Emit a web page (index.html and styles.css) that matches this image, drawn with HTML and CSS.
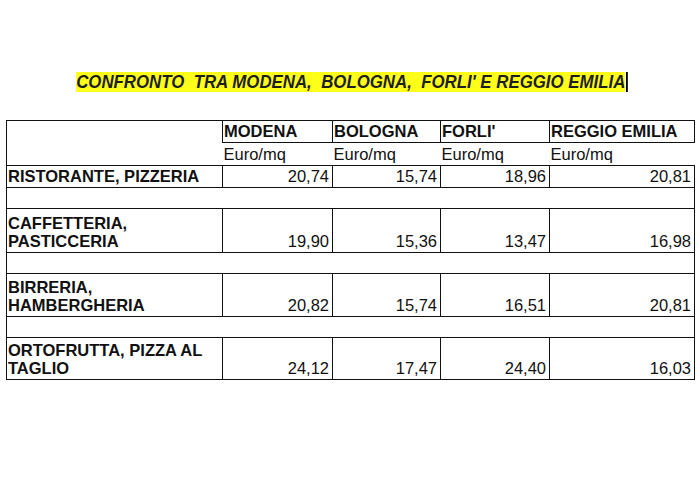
FILE: index.html
```html
<!DOCTYPE html>
<html lang="it">
<head>
<meta charset="utf-8">
<title>Confronto</title>
<link rel="stylesheet" href="styles.css">
</head>
<body>
<div class="page">
  <div class="title"><span class="title-inner"><span class="hl">CONFRONTO&nbsp; TRA MODENA,&nbsp; BOLOGNA,&nbsp; FORLI' E REGGIO EMILIA</span><span class="caret"></span></span></div>
  <table class="grid">
    <colgroup>
      <col class="c-label"><col class="c-mo"><col class="c-bo"><col class="c-fo"><col class="c-re">
    </colgroup>
    <tr class="h1">
      <td class="corner"></td>
      <td class="city">MODENA</td>
      <td class="city">BOLOGNA</td>
      <td class="city">FORLI'</td>
      <td class="city">REGGIO EMILIA</td>
    </tr>
    <tr class="h2">
      <td class="corner2"></td>
      <td class="unit">Euro/mq</td>
      <td class="unit">Euro/mq</td>
      <td class="unit">Euro/mq</td>
      <td class="unit">Euro/mq</td>
    </tr>
    <tr class="r1">
      <td class="lab">RISTORANTE, PIZZERIA</td>
      <td class="num">20,74</td><td class="num">15,74</td><td class="num">18,96</td><td class="num">20,81</td>
    </tr>
    <tr class="sep"><td colspan="5"></td></tr>
    <tr class="r2a">
      <td class="lab">CAFFETTERIA,<br>PASTICCERIA</td>
      <td class="num">19,90</td><td class="num">15,36</td><td class="num">13,47</td><td class="num">16,98</td>
    </tr>
    <tr class="sep"><td colspan="5"></td></tr>
    <tr class="r2b">
      <td class="lab">BIRRERIA,<br>HAMBERGHERIA</td>
      <td class="num">20,82</td><td class="num">15,74</td><td class="num">16,51</td><td class="num">20,81</td>
    </tr>
    <tr class="sep"><td colspan="5"></td></tr>
    <tr class="r2c">
      <td class="lab">ORTOFRUTTA, PIZZA AL<br>TAGLIO</td>
      <td class="num">24,12</td><td class="num">17,47</td><td class="num">24,40</td><td class="num">16,03</td>
    </tr>
  </table>
</div>
</body>
</html>
```
FILE: styles.css
```css
html, body {
  margin: 0;
  background: #fff;
}
.page {
  padding: 0 6px;
  font-family: "Liberation Sans", Arial, sans-serif;
  color: #111;
}
.title {
  margin-top: 72px;
  height: 21px;
  line-height: 21px;
  text-align: center;
  font-family: "Liberation Sans", Arial, sans-serif;
  font-weight: bold;
  font-style: italic;
  font-size: 18px;
  color: #1e1e1e;
  white-space: nowrap;
}
.title-inner {
  display: inline-block;
  transform: scaleX(0.935);
  transform-origin: 50% 50%;
  margin-left: 4px;
}
.hl {
  background: #ffff1a;
}
.caret {
  display: inline-block;
  width: 2px;
  height: 20px;
  background: #000;
  vertical-align: -4px;
  margin-left: 1px;
}
.grid {
  margin-top: 27px;
  border-collapse: collapse;
  table-layout: fixed;
  width: 688px;
  font-size: 16.5px;
  line-height: 18px;
}
.c-label { width: 216px; }
.c-mo { width: 110px; }
.c-bo { width: 108px; }
.c-fo { width: 109px; }
.c-re { width: 145px; }
.grid td {
  padding: 0 3px 2px 1px;
  vertical-align: bottom;
  white-space: nowrap;
}
.h1 { height: 22px; }
.h2 { height: 23px; }
.r1 { height: 22px; }
.sep { height: 21px; }
.r2a { height: 44px; }
.r2b { height: 43px; }
.r2c { height: 42px; }
.corner {
  border-top: 1px solid #111;
  border-left: 1px solid #111;
}
.corner2 {
  border-left: 1px solid #111;
}
.city {
  font-weight: bold;
  border: 1px solid #111;
}
.unit {
  border: none;
}
.lab {
  font-weight: bold;
  border: 1px solid #111;
}
.num {
  text-align: right;
  border: 1px solid #111;
}
.sep td {
  border: 1px solid #111;
}
```
